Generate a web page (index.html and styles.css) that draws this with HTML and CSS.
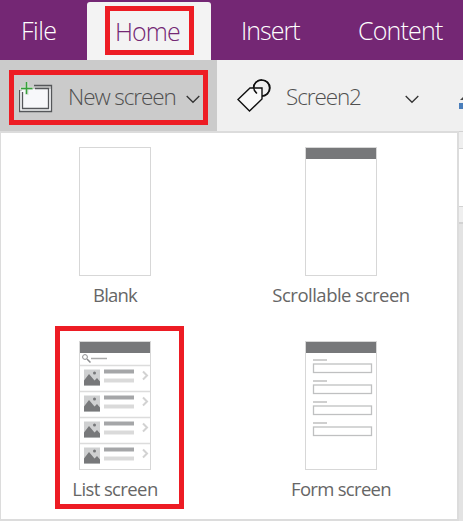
FILE: index.html
```html
<!DOCTYPE html>
<html lang="en">
<head>
<meta charset="utf-8">
<title>New screen</title>
<link rel="stylesheet" href="styles.css">
</head>
<body>
<nav class="tabs">
  <div class="tab file"><span>File</span></div>
  <div class="tab home"><span class="marked">Home</span></div>
  <div class="tab insert"><span>Insert</span></div>
  <div class="tab content"><span>Content</span></div>
</nav>
<div class="toolbar">
  <div class="new-screen">
    <div class="new-box">
      <svg class="new-icon" width="34" height="32" viewBox="0 0 34 32">
        <path d="M3 8H32V31H0V10H3Z" fill="#f7f8fa"/>
        <path d="M15 4.500H32.500V30.500H.5V9M16 7.500H29.500V27.500H3.500V11" fill="none" stroke="#55575a" stroke-width="1.3"/>
        <path d="M8 1V14M1 7.300H14" stroke="#d5e2d4" stroke-width="3"/>
        <path d="M7.500 1V13M2 7.500H13.500" stroke="#37a03b" stroke-width="1.500"/>
      </svg>
      <span class="command">New screen</span>
      <svg class="chevron" width="14" height="9" viewBox="0 0 14 9"><path d="M.7 1L7 7.300L13.300 1" fill="none" stroke="#333" stroke-width="1.3"/></svg>
    </div>
  </div>
  <div class="screen-name">
    <svg width="34" height="34" viewBox="0 0 34 34">
      <circle cx="24.500" cy="9" r="8" fill="none" stroke="#111" stroke-width="1.4"/>
      <path d="M13 9H25V20L12.500 32L1 20.500Z" fill="#f9f9f9" stroke="#111" stroke-width="1.4"/>
      <path d="M16.800 7C16.200 10 17 12 20 14.500M25 1A8 8 0 0 1 25 17M16.600 9A8 8 0 0 1 25 1" fill="none" stroke="#111" stroke-width="1.4"/>
    </svg>
    <span class="command">Screen2</span>
    <svg class="chevron" width="14" height="9" viewBox="0 0 14 9"><path d="M.7 1L7 7.300L13.300 1" fill="none" stroke="#333" stroke-width="1.3"/></svg>
  </div>
  <svg class="theme" width="4" height="14" viewBox="0 0 4 14"><path d="M1 4L4 1V4Z" fill="#444"/><path d="M0 7H4V13H0Z" fill="#4a7ebb"/></svg>
</div>
<main class="workspace">
  <section class="menu">
    <div class="option">
      <svg width="72" height="129" viewBox="0 0 72 129"><rect class="frame" x=".5" y=".5" width="71" height="128"/></svg>
      <span class="label blank">Blank</span>
    </div>
    <div class="option">
      <svg width="72" height="129" viewBox="0 0 72 129"><rect class="frame" x=".5" y=".5" width="71" height="128"/><path class="bar" d="M1 1H71V12H1Z"/></svg>
      <span class="label scroll">Scrollable screen</span>
    </div>
    <div class="option selected">
      <svg width="72" height="129" viewBox="0 0 72 129">
        <defs>
          <g id="row">
            <path d="M1 0H71" stroke="#dcdcdc" stroke-width="1.5"/>
            <path d="M5 4H21V20H5Z" fill="#cfd0d1"/>
            <path d="M5 15L10 8.500L15.500 15L18 12.500L21 16V20H5Z" fill="#77787a"/>
            <circle cx="15.500" cy="7.500" r="1.500" fill="#77787a"/>
            <path d="M25 4H55V8H25Z" fill="#a5a6a8"/>
            <path d="M25 13H55V17H25Z" fill="#dadada"/>
            <path d="M64 6L68 10L64 14" fill="none" stroke="#d2d2d2" stroke-width="2"/>
          </g>
        </defs>
        <rect class="frame" x=".5" y=".5" width="71" height="128"/>
        <path class="bar" d="M1 1H71V12H1Z"/>
        <circle cx="6" cy="16" r="2.400" fill="none" stroke="#8a8b8d"/>
        <path d="M8 18L11.500 21.500" stroke="#8a8b8d" stroke-width="1.5"/>
        <path d="M12 17.500H28" stroke="#aaa" stroke-width="1.500"/>
        <use href="#row" y="24.500"/><use href="#row" y="50.500"/><use href="#row" y="76.500"/><use href="#row" y="102.500"/>
      </svg>
      <span class="label list">List screen</span>
    </div>
    <div class="option">
      <svg width="72" height="129" viewBox="0 0 72 129">
        <defs><g id="field"><path d="M8 0H22" stroke="#cfcfcf" stroke-width="2"/><rect x="8.500" y="4" width="58" height="8.500" fill="#fff" stroke="#bfc0c1" stroke-width="1.300"/></g></defs>
        <rect class="frame" x=".5" y=".5" width="71" height="128"/>
        <path class="bar" d="M1 1H71V12H1Z"/>
        <use href="#field" y="19"/><use href="#field" y="40"/><use href="#field" y="61"/><use href="#field" y="82"/>
      </svg>
      <span class="label form">Form screen</span>
    </div>
  </section>
  <aside class="edge"><i class="strip"></i><i class="sheet"></i><i class="strip lower"></i></aside>
</main>
</body>
</html>
```

FILE: styles.css
```css
* { box-sizing: border-box; }
body { margin: 0; width: 463px; height: 521px; overflow: hidden; background: #fff; font-family: "Open Sans", "Noto Sans", sans-serif; }
svg { display: block; flex: none; }
.tabs { display: flex; height: 60px; background: #742774; color: #fff; font-size: 25px; font-weight: 300; white-space: nowrap; }
.tab { display: flex; align-items: center; height: 60px; line-height: 34px; }
.file { width: 87px; padding-left: 21px; letter-spacing: -.5px; }
.home { width: 124px; height: 58px; margin-top: 2px; padding: 4px 17px 0 18px; align-items: flex-start; background: #f3f3f3; border-radius: 3px 3px 0 0; color: #742774; }
.marked { width: 89px; height: 49px; padding: 3px 0 0 5px; border: 5px solid #ed1c24; letter-spacing: -.9px; }
.insert { width: 145px; padding-left: 30px; letter-spacing: -1px; }
.content { width: 107px; padding-left: 2px; letter-spacing: -.8px; }
.toolbar { display: flex; height: 71px; background: #f0f0f0; }
.new-screen { width: 217px; padding: 10px 9px; background: #cbcbcb; }
.new-box { display: flex; width: 199px; height: 55px; padding: 6px 0 0 5px; border: 5px solid #ed1c24; }
.command { color: #505050; font-size: 22.5px; font-weight: 300; line-height: 32px; letter-spacing: -1.1px; white-space: nowrap; }
.new-box .command { width: 118px; margin-left: 15px; }
.new-box .chevron { margin-top: 14px; }
.screen-name { display: flex; width: 242px; padding: 19px 0 0 20px; }
.screen-name .command { width: 119px; margin: 2px 0 0 15px; }
.screen-name .chevron { margin-top: 16px; }
.theme { margin-top: 36px; }
.workspace { display: flex; height: 390px; }
.menu { display: grid; grid-template-columns: 226px 226px; grid-template-rows: 194px 194px; width: 459px; height: 390px; padding-left: 1px; border: solid #dcdcdc; border-width: 2px 2px 2px 1px; background: #fff; }
.option { display: flex; flex-direction: column; align-items: center; padding-top: 14px; }
.selected { width: 129px; height: 183px; margin: -1px 0 0 53px; padding: 10px 9px 0 0; border: 5px solid #ed1c24; }
.label { color: #666; font-size: 18.5px; line-height: 24px; margin-top: 7px; white-space: nowrap; }
.frame { fill: #fff; stroke: #d7d7d7; }
.bar { fill: #77787a; }
.blank { letter-spacing: -.8px; }
.scroll { letter-spacing: -.5px; }
.list { letter-spacing: -.6px; }
.form { letter-spacing: -.7px; }
.edge { width: 4px; background: #e3e3e3; }
.strip { display: block; height: 18px; background: #efefef; border: solid #d2d2d2; border-width: 1px 0; }
.sheet { display: block; height: 57px; background: #fff; }
.lower { border-bottom-width: 2px; }
```
